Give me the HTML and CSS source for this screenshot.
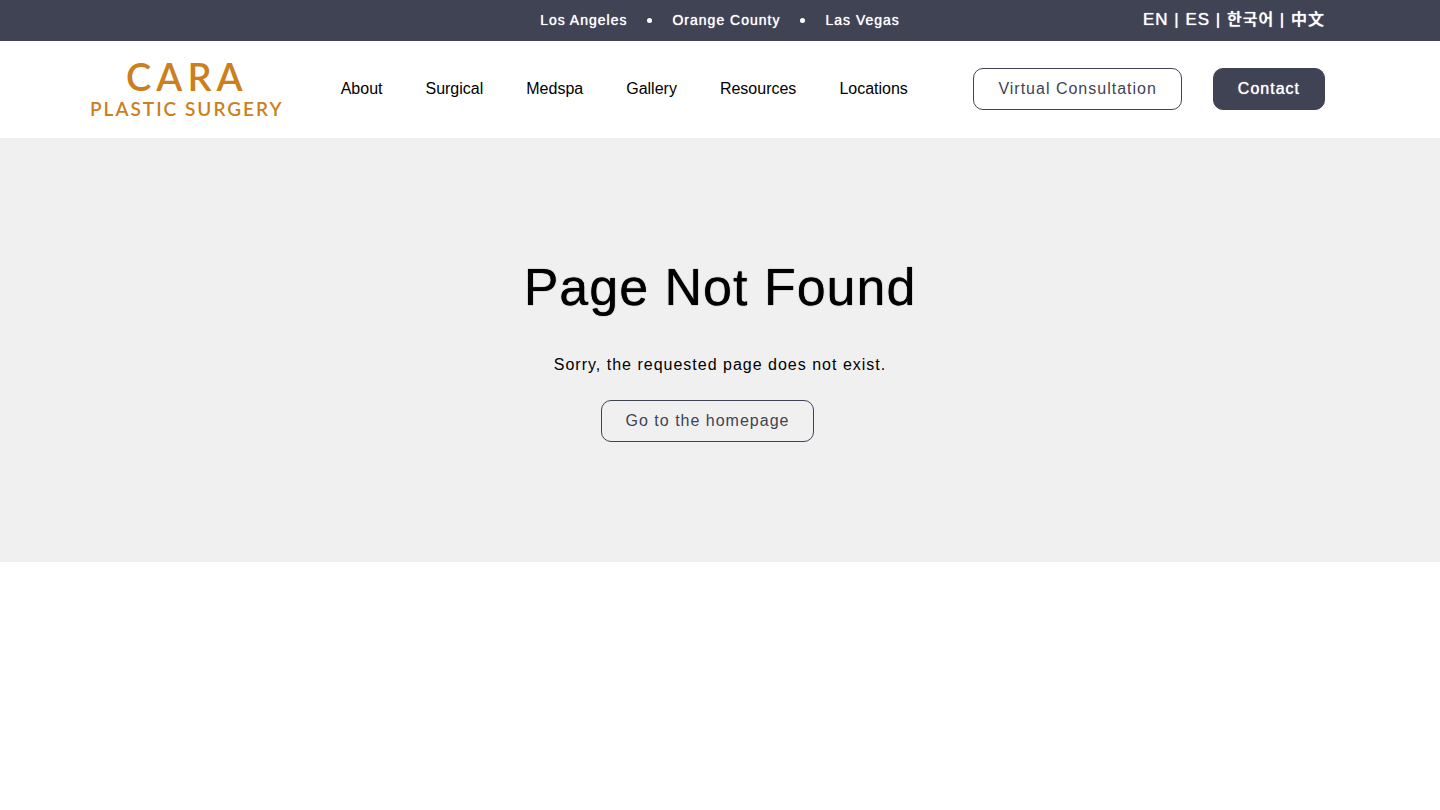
FILE: index.html
```
<!DOCTYPE html>
<html lang="en">
<head>
  <meta charset="UTF-8">
  <meta name="viewport" content="width=device-width, initial-scale=1.0">
  <title>Page Not Found | Cara Plastic Surgery</title>
  <link rel="stylesheet" href="styles.css">
</head>
<body>
  <div class="top-bar">
    <ul class="offices">
      <li><a href="#">Los Angeles</a></li>
      <li><a href="#">Orange County</a></li>
      <li><a href="#">Las Vegas</a></li>
    </ul>
    <div class="languages">
      <a href="#">EN</a> | <a href="#">ES</a> | <a href="#" lang="ko">한국어</a> | <a href="#" lang="zh">中文</a>
    </div>
  </div>

  <header class="header">
    <a class="logo" href="#">
      <span class="logo-name">CARA</span>
      <span class="logo-tagline">PLASTIC SURGERY</span>
    </a>
    <nav class="main-nav">
      <a href="#">About</a>
      <a href="#">Surgical</a>
      <a href="#">Medspa</a>
      <a href="#">Gallery</a>
      <a href="#">Resources</a>
      <a href="#">Locations</a>
    </nav>
    <div class="header-buttons">
      <a class="btn" href="#">Virtual Consultation</a>
      <a class="btn btn-filled" href="#">Contact</a>
    </div>
  </header>

  <main class="not-found">
    <h1>Page Not Found</h1>
    <p>Sorry, the requested page does not exist.</p>
    <a class="btn" href="#">Go to the homepage</a>
  </main>
</body>
</html>
```
FILE: styles.css
```
/* General styles */
* {
  box-sizing: border-box;
}

body {
  margin: 0;
  font-family: "Liberation Sans", Arial, sans-serif;
  font-size: 16px;
  color: #000;
  background: #fff;
}

a {
  color: inherit;
  text-decoration: none;
}

/* Top bar */
.top-bar {
  display: grid;
  grid-template-columns: 1fr auto 1fr;
  align-items: center;
  padding: 10px 115px 11px;
  background: #404354;
  color: #fff;
  letter-spacing: 1px;
  line-height: 20px;
  text-shadow: 0 0 1px #fff;
}

.offices {
  grid-column: 2;
  display: flex;
  margin: 0;
  padding: 0;
  list-style: none;
  font-size: 14px;
}

.offices li {
  display: flex;
  align-items: center;
}

.offices li + li::before {
  content: "";
  width: 5px;
  height: 5px;
  margin: 0 20px;
  border-radius: 50%;
  background: #fff;
}

.languages {
  justify-self: end;
  font-size: 17px;
  white-space: nowrap;
}

.languages [lang="ko"],
.languages [lang="zh"] {
  font-size: 16px;
  font-weight: 500;
  line-height: 1;
}

.languages [lang="ko"] {
  font-family: "Noto Sans CJK KR", sans-serif;
}

.languages [lang="zh"] {
  font-family: "Noto Sans CJK SC", sans-serif;
}

/* Header */
.header {
  display: flex;
  align-items: center;
  padding: 15px 115px 17px 90px;
}

.logo {
  display: flex;
  flex-direction: column;
  align-items: center;
  font-family: Lato, sans-serif;
  color: #cb7f1d;
}

.logo-name {
  font-size: 38px;
  font-weight: 600;
  line-height: 41px;
  letter-spacing: 5px;
}

.logo-tagline {
  font-size: 19px;
  font-weight: 600;
  line-height: 24px;
  letter-spacing: 2px;
}

.main-nav {
  display: flex;
  gap: 43px;
  margin-left: 57px;
}

.header-buttons {
  display: flex;
  gap: 31px;
  margin-left: auto;
}

.btn {
  display: inline-block;
  padding: 11px 24px;
  border: 1px solid #404354;
  border-radius: 10px;
  color: #404354;
  line-height: 18px;
  letter-spacing: 1px;
  white-space: nowrap;
}

.btn:hover,
.btn-filled {
  background: #404354;
  color: #fff;
}

.btn-filled {
  text-shadow: 0 0 1px #fff;
}

/* 404 message */
.not-found {
  padding: 119px 20px 120px;
  background: #f0f0f0;
  text-align: center;
}

.not-found h1 {
  margin: 0 0 38px;
  font-size: 52px;
  font-weight: 400;
  line-height: 60px;
  letter-spacing: 1px;
  text-shadow: 0 0 1px #000;
}

.not-found p {
  margin: 0 0 25px;
  line-height: 20px;
  letter-spacing: 1px;
}

.not-found .btn {
  margin-right: 25px;
}
```
